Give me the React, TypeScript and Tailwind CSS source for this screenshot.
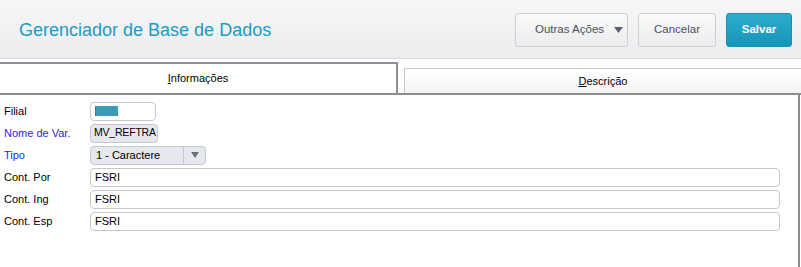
const fields = [
  { label: "Cont. Por", value: "FSRI" },
  { label: "Cont. Ing", value: "FSRI" },
  { label: "Cont. Esp", value: "FSRI" },
]

const App = () => {
  return (
    <div className="h-[267px] w-[801px] overflow-hidden bg-white font-['Liberation_Sans',Arial,sans-serif]">
      {/* HEADER */}
      <div className="flex h-[59px] items-center justify-between border-b border-[#d8d9dc] bg-gradient-to-b from-[#f7f7f8] to-[#ebecee] pl-[19px] pr-[9px] pt-[2px]">
        <h1 className="text-[18px] text-[#1b9bc6]">Gerenciador de Base de Dados</h1>
        <div className="flex gap-[10px]">
          <button className="flex h-[34px] w-[113px] items-center justify-between rounded-[3px] border border-[#cfd0d3] bg-gradient-to-b from-[#fafafa] to-[#ececee] pl-[19px] pr-[4px] text-[11.5px] text-[#4a5060]">
            <span>Outras Ações</span>
            <svg width="9" height="6" viewBox="0 0 9 6">
              <path d="M0 0h9L4.5 6z" fill="#5b6070" />
            </svg>
          </button>
          <button className="h-[34px] w-[78px] rounded-[3px] border border-[#cfd0d3] bg-gradient-to-b from-[#fafafa] to-[#ececee] text-[11.5px] text-[#4a5060]">
            Cancelar
          </button>
          <button className="h-[34px] w-[66px] rounded-[3px] border border-[#1690b3] bg-gradient-to-b from-[#2fabcb] to-[#1296b9] text-[11.5px] font-bold text-white">
            Salvar
          </button>
        </div>
      </div>

      {/* ABAS */}
      <div className="mt-[5px] flex h-[31px] items-end border-b-2 border-[#8a8d92]">
        <div className="flex h-[31px] w-[398px] items-center justify-center border-r-2 border-t-2 border-[#8e9095] text-[11px] text-black">
          <span>
            <span className="underline">I</span>nformações
          </span>
        </div>
        <div className="ml-[6px] flex h-[25px] flex-1 items-center justify-center border-l border-t border-[#c9c9c9] bg-gradient-to-b from-[#ffffff] to-[#f3f3f3] text-[11px] text-black">
          <span>
            <span className="underline">D</span>escrição
          </span>
        </div>
      </div>

      {/* FORMULARIO */}
      <div className="mr-[1px] flex h-[173px] flex-col gap-[4px] border-r-2 border-[#8a8d92] pl-[4px] pr-[18px] pt-[7px] text-[11px]">
        <div className="flex h-[18px] items-center">
          <span className="w-[86px] text-black">Filial</span>
          <div className="flex h-[19px] w-[66px] items-center rounded-[4px] border border-[#c8c8c8] bg-white px-[4px]">
            <div className="h-[10px] w-[23px] border-l border-[#c0504d] bg-[#3a9db5]" />
          </div>
        </div>
        <div className="flex h-[18px] items-center">
          <span className="w-[86px] text-[#2626e6]">Nome de Var.</span>
          <div className="flex h-[19px] items-center whitespace-nowrap rounded-[4px] border border-[#c8c8c8] bg-[#e6e8ef] pl-[3px] pr-[1px] text-[10.5px] tracking-[-0.2px] text-black">
            MV_REFTRA
          </div>
        </div>
        <div className="flex h-[18px] items-center">
          <span className="w-[86px] text-[#2626e6]">Tipo</span>
          <div className="flex h-[19px] w-[116px] items-center rounded-[4px] border border-[#c8c8c8] bg-[#e6e8ef] text-[11px] text-black">
            <span className="flex-1 pl-[5px]">1 - Caractere</span>
            <div className="flex h-full w-[22px] items-center justify-center border-l border-[#c8c8c8]">
              <svg width="8" height="6" viewBox="0 0 8 6">
                <path d="M0 0h8L4 6z" fill="#6b6f7a" />
              </svg>
            </div>
          </div>
        </div>
        {fields.map((field) => (
          <div key={field.label} className="flex h-[18px] items-center">
            <span className="w-[86px] text-black">{field.label}</span>
            <div className="flex h-[19px] flex-1 items-center rounded-[4px] border border-[#c8c8c8] bg-white px-[4px] text-[11px] text-black">
              {field.value}
            </div>
          </div>
        ))}
      </div>
    </div>
  )
}

export default App
